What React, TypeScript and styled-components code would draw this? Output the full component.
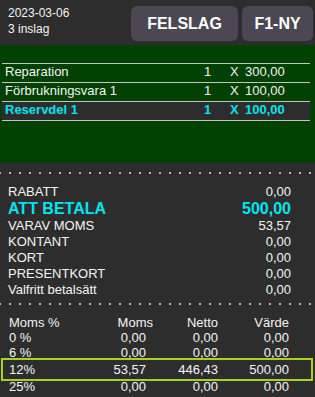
import React from "react";
import styled, { createGlobalStyle } from "styled-components";

const Global = createGlobalStyle`
  html, body { margin: 0; padding: 0; background: #2d2d2d; }
  body { font-family: "Liberation Sans", Arial, sans-serif; color: #f4f4f4; }
`;

const Screen = styled.div`
  width: 315px;
  height: 397px;
  background: #2d2d2d;
  overflow: hidden;
  display: flex;
  flex-direction: column;
`;

const Header = styled.div`
  height: 45px;
  display: flex;
  align-items: flex-start;
  justify-content: space-between;
`;

const Info = styled.div`
  padding: 5px 0 0 8px;
  font-size: 12px;
  line-height: 16px;
  color: #f4f4f4;
`;

const Buttons = styled.div`
  display: flex;
  gap: 4px;
  padding: 6px 2px 0 0;
`;

const Btn = styled.div<{ $w: number }>`
  width: ${(p) => p.$w}px;
  height: 35px;
  border-radius: 6px;
  background: #4b4854;
  color: #ffffff;
  font-weight: bold;
  font-size: 16px;
  display: flex;
  align-items: center;
  justify-content: center;
`;

const ItemsPanel = styled.div`
  background: #004000;
  height: 118px;
  padding-top: 18px;
  box-sizing: border-box;
`;

const ItemList = styled.div`
  margin: 0 5px 0 2px;
  border-bottom: 1px solid #c4c4c4;
`;

const ItemRow = styled.div<{ $active?: boolean }>`
  display: grid;
  grid-template-columns: 199px 26px 15px auto;
  padding: 0 0 2px 3px;
  height: 16px;
  line-height: 16px;
  font-size: 13px;
  border-top: 1px solid #c4c4c4;
  background: ${(p) => (p.$active ? "#2d2d2d" : "transparent")};
  color: ${(p) => (p.$active ? "#00e5ef" : "#f4f4f4")};
  font-weight: ${(p) => (p.$active ? "bold" : "normal")};
`;

const Dots = styled.div<{ $mt: number }>`
  margin-top: ${(p) => p.$mt}px;
  height: 2px;
  background-image: linear-gradient(to right, #b8b8b8 2px, transparent 2px);
  background-size: 10px 2px;
  background-position: 9px 0;
  background-repeat: repeat-x;
`;

const Summary = styled.div`
  margin-top: 10px;
  padding: 0 24px 0 8px;
`;

const SumRow = styled.div<{ $big?: boolean }>`
  display: flex;
  justify-content: space-between;
  font-size: ${(p) => (p.$big ? "16px" : "13px")};
  line-height: ${(p) => (p.$big ? "18px" : "16px")};
  font-weight: ${(p) => (p.$big ? "bold" : "normal")};
  color: ${(p) => (p.$big ? "#00e5ef" : "#f4f4f4")};
`;

const VatTable = styled.div`
  margin-top: 10px;
`;

const VatRow = styled.div<{ $h: number; $pt?: number; $mark?: boolean }>`
  position: relative;
  display: grid;
  grid-template-columns: 84px 60px 65px 71px;
  padding: ${(p) => p.$pt ?? 0}px 26px 0 9px;
  height: ${(p) => p.$h}px;
  line-height: 15px;
  font-size: 13px;
  color: #f4f4f4;
  &::after {
    content: "";
    display: ${(p) => (p.$mark ? "block" : "none")};
    position: absolute;
    left: 1px;
    right: 2px;
    top: -2px;
    bottom: -2px;
    border: 2px solid #a6d41c;
  }
`;

const Cell = styled.span<{ $pr?: number }>`
  text-align: right;
  padding-right: ${(p) => p.$pr ?? 0}px;
`;

const Label = styled.span``;

const items = [
  { name: "Reparation", qty: "1", price: "300,00" },
  { name: "Förbrukningsvara 1", qty: "1", price: "100,00" },
  { name: "Reservdel 1", qty: "1", price: "100,00", active: true },
];

const sums: { label: string; value: string; big?: boolean }[] = [
  { label: "RABATT", value: "0,00" },
  { label: "ATT BETALA", value: "500,00", big: true },
  { label: "VARAV MOMS", value: "53,57" },
  { label: "KONTANT", value: "0,00" },
  { label: "KORT", value: "0,00" },
  { label: "PRESENTKORT", value: "0,00" },
  { label: "Valfritt betalsätt", value: "0,00" },
];

const vat = [
  { p: "0 %", m: "0,00", n: "0,00", v: "0,00", h: 15 },
  { p: "6 %", m: "0,00", n: "0,00", v: "0,00", h: 15 },
  { p: "12%", m: "53,57", n: "446,43", v: "500,00", h: 17, pt: 2, mark: true },
  { p: "25%", m: "0,00", n: "0,00", v: "0,00", h: 15 },
];

export default function App() {
  return (
    <Screen>
      <Global />
      <Header>
        <Info>
          <div>2023-03-06</div>
          <div>3 inslag</div>
        </Info>
        <Buttons>
          <Btn $w={107}>FELSLAG</Btn>
          <Btn $w={71}>F1-NY</Btn>
        </Buttons>
      </Header>
      <ItemsPanel>
        <ItemList>
          {items.map((it) => (
            <ItemRow key={it.name} $active={it.active}>
              <span>{it.name}</span>
              <span>{it.qty}</span>
              <span>X</span>
              <span>{it.price}</span>
            </ItemRow>
          ))}
        </ItemList>
      </ItemsPanel>
      <Dots $mt={9} />
      <Summary>
        {sums.map((s) => (
          <SumRow key={s.label} $big={s.big}>
            <span>{s.label}</span>
            <span>{s.value}</span>
          </SumRow>
        ))}
      </Summary>
      <Dots $mt={5} />
      <VatTable>
        <VatRow $h={15}>
          <Label>Moms %</Label>
          <Cell>Moms</Cell>
          <Cell>Netto</Cell>
          <Cell>Värde</Cell>
        </VatRow>
        {vat.map((r) => (
          <VatRow key={r.p} $h={r.h} $pt={r.pt} $mark={r.mark}>
            <Label>{r.p}</Label>
            <Cell $pr={7}>{r.m}</Cell>
            <Cell>{r.n}</Cell>
            <Cell>{r.v}</Cell>
          </VatRow>
        ))}
      </VatTable>
    </Screen>
  );
}
